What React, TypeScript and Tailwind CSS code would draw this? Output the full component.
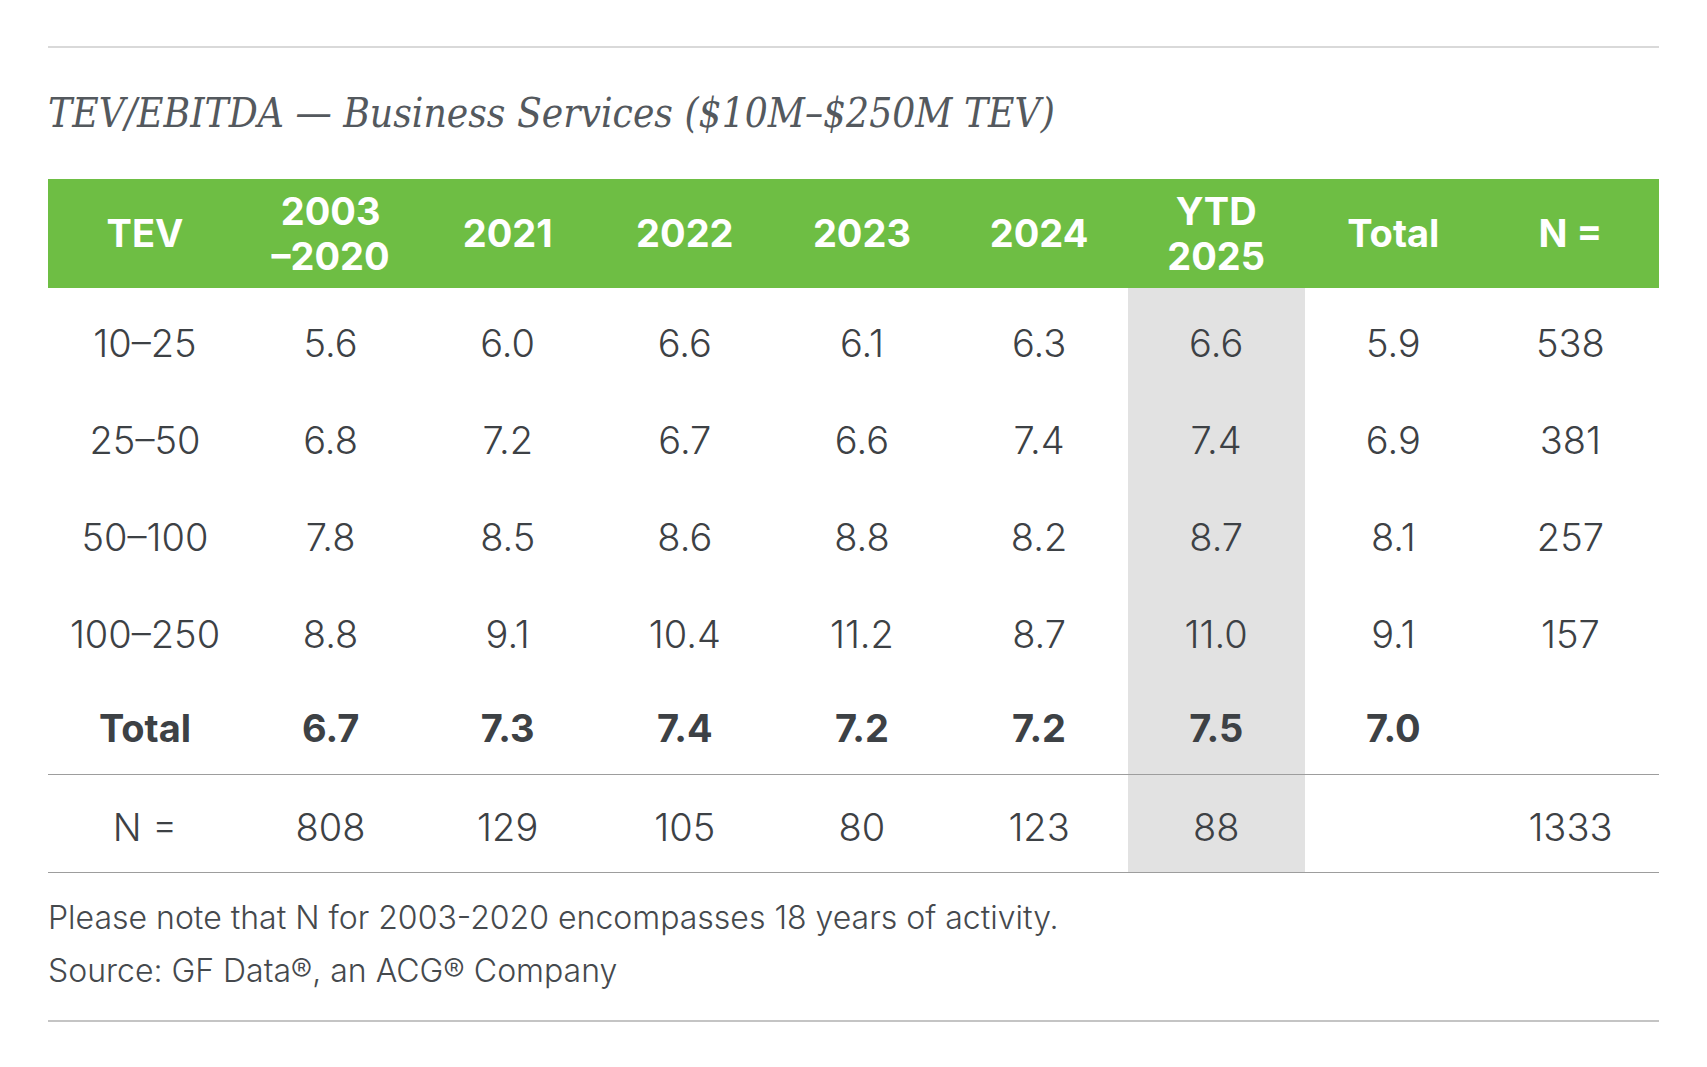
import React from "react";

const cols = ["TEV", "2003\n–2020", "2021", "2022", "2023", "2024", "YTD\n2025", "Total", "N ="];

const rows: string[][] = [
  ["10–25", "5.6", "6.0", "6.6", "6.1", "6.3", "6.6", "5.9", "538"],
  ["25–50", "6.8", "7.2", "6.7", "6.6", "7.4", "7.4", "6.9", "381"],
  ["50–100", "7.8", "8.5", "8.6", "8.8", "8.2", "8.7", "8.1", "257"],
  ["100–250", "8.8", "9.1", "10.4", "11.2", "8.7", "11.0", "9.1", "157"],
];
const totalRow = ["Total", "6.7", "7.3", "7.4", "7.2", "7.2", "7.5", "7.0", ""];
const nRow = ["N =", "808", "129", "105", "80", "123", "88", "", "1333"];

const grid = "grid grid-cols-[194px_repeat(8,minmax(0,1fr))]";

function Row({ cells, kind }: { cells: string[]; kind: "first" | "mid" | "total" | "n" }) {
  const h =
    kind === "first"
      ? "h-[104px] pt-[7px] font-light"
      : kind === "total"
      ? "h-[91px] font-bold"
      : kind === "n"
      ? "h-[97px] pt-[8px] font-light"
      : "h-[97px] font-light";
  return (
    <div className={grid}>
      {cells.map((c, i) => (
        <div
          key={i}
          className={"flex items-center justify-center " + h + (i === 6 ? " bg-[#e2e2e2]" : "")}
        >
          {c}
        </div>
      ))}
    </div>
  );
}

export default function App() {
  return (
    <div className="w-[1707px] h-[1067px] bg-white px-12 pt-[46px] text-[#3d4145] [font-family:Inter,'Noto_Sans',sans-serif]">
      <div className="h-[2px] bg-[#d9d9d9]" />
      <h2 className="mt-[41px] h-[50px] leading-[50px] text-[40.3px] italic text-[#54595e] [font-family:'DejaVu_Serif_Condensed','DejaVu_Serif',serif]">
        TEV/EBITDA — Business Services ($10M–$250M TEV)
      </h2>
      <div className="mt-[40px]">
        <div className={grid + " h-[109px] bg-[#6ebe44] text-white font-bold text-[38px] leading-[45px]"}>
          {cols.map((c, i) => (
            <div key={i} className="flex flex-col items-center justify-center text-center">
              {c.split("\n").map((l, j) => (
                <span key={j}>{l}</span>
              ))}
            </div>
          ))}
        </div>
        <div className="text-[38px]">
          {rows.map((r, i) => (
            <Row key={i} cells={r} kind={i === 0 ? "first" : "mid"} />
          ))}
          <Row cells={totalRow} kind="total" />
          <div className="border-t border-b border-[#9d9d9d]">
            <Row cells={nRow} kind="n" />
          </div>
        </div>
      </div>
      <div className="mt-[18px] text-[32px] leading-[53px] font-light text-[#45494d]">
        <p>Please note that N for 2003-2020 encompasses 18 years of activity.</p>
        <p>Source: GF Data®, an ACG® Company</p>
      </div>
      <div className="mt-[23px] h-[2px] bg-[#c4c4c4]" />
    </div>
  );
}
